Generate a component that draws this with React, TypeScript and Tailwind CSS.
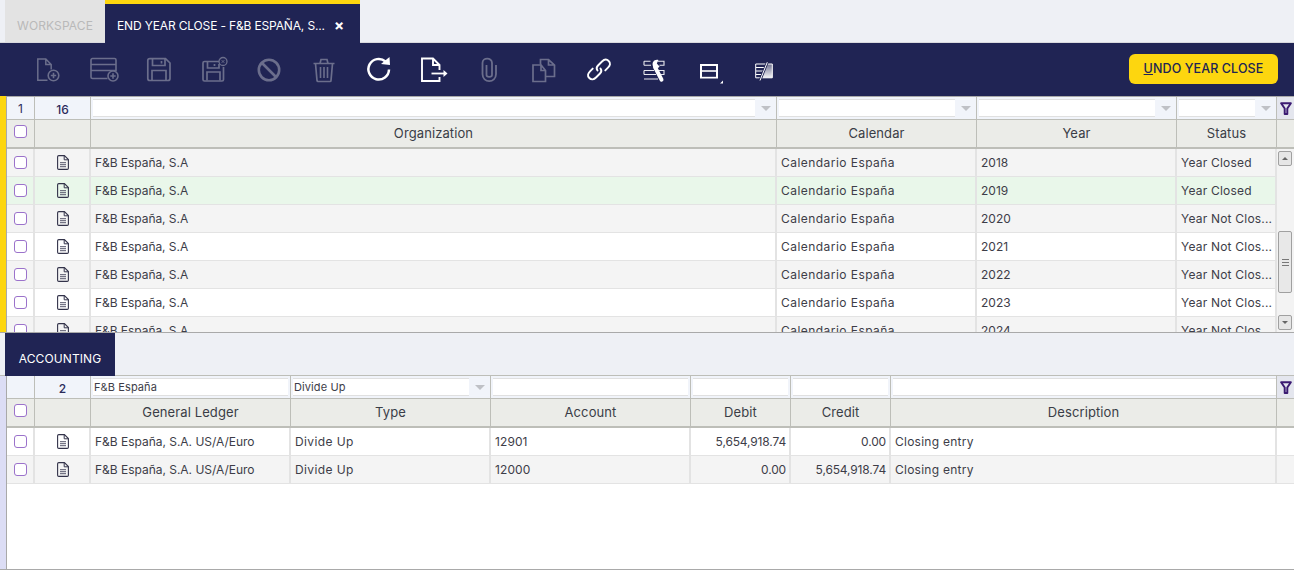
import React from "react";

const DIM = "#6b6e8c";
const W = "#ffffff";
const NAVY = "#202454";

function Ico({ children, w = 28, h = 28, className = "" }: { children: React.ReactNode; w?: number; h?: number; className?: string }) {
  return (
    <svg width={w} height={h} viewBox={`0 0 ${w} ${h}`} fill="none" className={"shrink-0 " + className}>
      {children}
    </svg>
  );
}

const NewDoc = () => (
  <Ico>
    <path d="M13.5 24.3H3.8V3H11.8L17.2 8.5V13.5M11.8 3V8.5H17.2" stroke={DIM} strokeWidth="1.5" />
    <circle cx="19.5" cy="19.5" r="5.3" stroke={DIM} strokeWidth="1.6" />
    <path d="M19.5 16.8V22.2M16.8 19.5H22.2" stroke={DIM} strokeWidth="1.6" />
  </Ico>
);
const NewLine = () => (
  <Ico w={30}>
    <path d="M18.5 22.5H3.5C2.6 22.5 2 21.9 2 21V4C2 3.2 2.6 2.5 3.5 2.5H25.5C26.4 2.5 27 3.2 27 4V15.5M2 8.5H27M2 14.5H27" stroke={DIM} strokeWidth="1.6" />
    <circle cx="24" cy="20" r="5" fill={NAVY} stroke={DIM} strokeWidth="1.6" />
    <path d="M24 17.3V22.7M21.3 20H26.7" stroke={DIM} strokeWidth="1.6" />
  </Ico>
);
const Save = () => (
  <Ico>
    <path d="M2.8 4.5C2.8 3.5 3.8 2.7 4.8 2.7H20.5L25 7V22.5C25 23.5 24.2 24.5 23 24.5H4.8C3.8 24.5 2.8 23.5 2.8 22.5Z" stroke={DIM} strokeWidth="1.7" />
    <path d="M7.5 3V9.5H20V3M16.5 5V7.5M7 24V14.5H21V24" stroke={DIM} strokeWidth="1.7" />
  </Ico>
);
const SaveClose = () => (
  <Ico>
    <path d="M19 5.5H4.5C3.6 5.5 3 6.1 3 7V23.5C3 24.4 3.6 25 4.5 25H22C22.9 25 23.5 24.4 23.5 23.5V11" stroke={DIM} strokeWidth="1.7" />
    <path d="M7.5 6V12H19V8M14.5 8V10M7 24.5V16H20V24.5" stroke={DIM} strokeWidth="1.7" />
    <circle cx="23" cy="5.5" r="4" stroke={DIM} strokeWidth="1.3" />
    <path d="M21.7 4.2L24.3 6.8M24.3 4.2L21.7 6.8" stroke={DIM} strokeWidth="1" />
  </Ico>
);
const Ban = () => (
  <Ico>
    <circle cx="14" cy="14" r="10.2" stroke={DIM} strokeWidth="2.6" />
    <path d="M7 7L21 21" stroke={DIM} strokeWidth="2.6" />
  </Ico>
);
const Trash = () => (
  <Ico>
    <path d="M3.5 7.5H24.5M10 7.5L11 3.5H17L18 7.5M5.5 7.5L7 24.5C7.1 25 7.5 25.5 8 25.5H20C20.5 25.5 21 25 21 24.5L22.5 7.5" stroke={DIM} strokeWidth="1.7" />
    <path d="M10.5 11V22M14 11V22M17.5 11V22" stroke={DIM} strokeWidth="1.6" />
  </Ico>
);
const Refresh = () => (
  <Ico>
    <path d="M20.5 5.5A10.3 10.3 0 1 0 24 13.5" stroke={W} strokeWidth="2.5" />
    <path d="M16 8L25 9L24.5 1Z" fill={W} />
  </Ico>
);
const Export = () => (
  <Ico w={30}>
    <path d="M19.5 21V25H2V2.5H13L19.5 9V14M13 2.5V9H19.5" stroke={W} strokeWidth="1.9" />
    <path d="M11.5 17.5H24" stroke={W} strokeWidth="1.8" />
    <path d="M23.5 14L27.5 17.5L23.5 21Z" fill={W} />
  </Ico>
);
const Clip = () => (
  <Ico>
    <path d="M11.5 9V19C11.5 21.5 17 21.5 17 19V7C17 1.2 7.5 1.2 7.5 7V18C7.5 27.5 21 27.5 21 18V9" stroke={DIM} strokeWidth="1.8" />
  </Ico>
);
const Copy = () => (
  <Ico>
    <path d="M11 9H3V25.5H15.5V14.5L11 9V14.5H15.5" stroke={DIM} strokeWidth="1.7" />
    <path d="M10.5 8V3.5H18.5L24.5 9V20.5H16M18.5 3.5V9H24.5" stroke={DIM} strokeWidth="1.7" />
  </Ico>
);
const LinkIcon = () => (
  <Ico>
    <path d="M12.5 14.5C11 12.5 11.5 11 13 9.5L17 5.5C19 3.5 21.5 2.8 23.7 5C26 7.2 25 9.7 23 11.7L20.3 14.4" stroke={W} strokeWidth="1.9" strokeLinecap="round" />
    <path d="M15.5 12.5C17 14.5 16.5 16 15 17.5L11 21.5C9 23.5 6.5 24.2 4.3 22C2 19.8 3 17.3 5 15.3L7.7 12.6" stroke={W} strokeWidth="1.9" strokeLinecap="round" />
  </Ico>
);
const Tools = () => (
  <Ico>
    <path d="M4 5.2H10.5M4 9.2H11M4 14.5H14M4 18.5H16M4 23H18M18 5.2H24V9.2H19.5M19 14.5H24V18.5H21M4 5.2V9.2M4 14.5V18.5" stroke={W} strokeWidth="1.1" opacity="0.9" />
    <path d="M15 11L21.5 23.6" stroke={W} strokeWidth="4" strokeLinecap="round" />
    <path d="M18.5 4C14.5 3 11.5 6 13 10.5C14.5 13 18.5 12.5 19.5 10.5L16.8 7.5Z" fill={W} />
  </Ico>
);
const Layout = () => (
  <Ico w={28}>
    <rect x="5" y="8" width="18" height="14.5" fill={W} />
    <rect x="7" y="10" width="14" height="4.2" fill={NAVY} />
    <rect x="7" y="15.8" width="14" height="5" fill={NAVY} />
    <path d="M28 24.5V27.5H25Z" fill={W} />
  </Ico>
);
const Form = () => (
  <Ico w={28}>
    <defs>
      <linearGradient id="fg" x1="0" y1="0" x2="0" y2="1">
        <stop offset="0" stopColor="#ffffff" stopOpacity="0.35" />
        <stop offset="1" stopColor="#ffffff" stopOpacity="0.95" />
      </linearGradient>
    </defs>
    <path d="M16.5 8H22.3V21.8H11.5Z" fill="url(#fg)" />
    <path d="M5.7 8H22.3V21.8H5.7Z" stroke={W} strokeWidth="1" />
    <path d="M6 11.5H15M6 15H14M6 18.5H13" stroke={W} strokeWidth="1" />
    <path d="M17.3 6.2L10 24.5" stroke={NAVY} strokeWidth="2.6" />
    <path d="M17.3 6.2L10 24.5" stroke={W} strokeWidth="1" />
  </Ico>
);

const RowDoc = () => (
  <svg width="12" height="15" viewBox="0 0 12 15" fill="none">
    <path d="M1.8.6H7.4L11.4 4.6V13.2C11.4 13.9 10.9 14.4 10.2 14.4H1.8C1.1 14.4.6 13.9.6 13.2V1.8C.6 1.1 1.1.6 1.8.6Z" stroke="#33334a" strokeWidth="1.1" />
    <path d="M7.2.8V4.8H11.2" stroke="#33334a" strokeWidth="1" />
    <path d="M3 7.7H9M3 9.7H9M3 11.7H9" stroke="#55566a" strokeWidth="1" />
  </svg>
);

const Funnel = () => (
  <svg width="12" height="13" viewBox="0 0 11 12" fill="none">
    <path d="M1 1.2H10L6.7 6V11H4.3V6Z" stroke="#3b1a72" strokeWidth="1.8" strokeLinejoin="round" />
  </svg>
);

const Check = ({ className = "" }: { className?: string }) => (
  <span className={"block w-[13px] h-[13px] rounded-[3px] border-[1.5px] border-[#9b72cb] bg-white " + className} />
);

const Arrow = () => (
  <span className="w-0 h-0 border-x-[5px] border-x-transparent border-t-[5px] border-t-[#bfc1c6]" />
);

function FilterCell({ w, arrow, value, last }: { w: number; arrow?: boolean; value?: string; last?: boolean }) {
  return (
    <div style={{ width: w }} className="shrink-0 h-full flex bg-[#f1f4fa] border-r border-[#bdbeb8]">
      <div className={"my-[2px] ml-[2px] flex-1 min-w-0 h-[18px] bg-white border-y border-[#e0e0e0] pl-[1px] text-[11px] leading-[16px] text-[#3d3d48] " + (last ? "mr-0" : arrow ? "" : "mr-[2px]")}>
        {value}
      </div>
      {arrow && (
        <div className="w-[21px] shrink-0 flex items-center justify-center">
          <Arrow />
        </div>
      )}
    </div>
  );
}

function FilterRow({ left, count, cols }: { left: string; count: string; cols: React.ReactNode }) {
  return (
    <div className="flex h-[23px] border-b border-[#bdbeb8] shrink-0">
      <div className="w-[28px] shrink-0 bg-[#f1f4fa] border-r border-[#bdbeb8] text-center text-[12px] leading-[24px] text-[#2a2a5a]">{left}</div>
      <div className="w-[56px] shrink-0 bg-[#f1f4fa] border-r border-[#bdbeb8] text-center text-[12px] leading-[25px] text-[#2a2a5a] font-medium">{count}</div>
      {cols}
      <div className="flex-1 flex items-center justify-center bg-[#e4e6ee]">
        <Funnel />
      </div>
    </div>
  );
}

function HeaderRow({ cols, widths }: { cols: string[]; widths: number[] }) {
  return (
    <div className="h-[29px] flex shrink-0 bg-[#ebece8] border-b-2 border-[#bdbeb8] text-[13px] text-[#3a3d46]">
      <div className="w-[28px] shrink-0 border-r border-[#bdbeb8] pl-[7px] pt-[5px]">
        <Check />
      </div>
      <div className="w-[56px] shrink-0 border-r border-[#bdbeb8]" />
      {cols.map((c, i) => (
        <div key={c} style={{ width: widths[i] }} className="shrink-0 border-r border-[#bdbeb8] flex items-center justify-center">
          {c}
        </div>
      ))}
    </div>
  );
}

function DataRow({ cells, widths, bg, right = [], tracks }: { cells: string[]; widths: number[]; bg: string; right?: number[]; tracks: string[] }) {
  return (
    <div className={"flex h-[28px] shrink-0 border-b border-[#e3e3e3] text-[12px] text-[#3d3d48] " + bg}>
      <div className="w-[28px] shrink-0 border-r-2 border-[#e3e3e3] pl-[7px] pt-[7px]">
        <Check />
      </div>
      <div className="w-[56px] shrink-0 border-r-2 border-[#e3e3e3] flex items-center justify-center pl-[1px]">
        <RowDoc />
      </div>
      {cells.map((c, i) => (
        <div
          key={i}
          style={{ width: widths[i] }}
          className={"shrink-0 border-r-2 border-[#e3e3e3] flex items-center pl-[4px] pr-[3px] whitespace-nowrap overflow-hidden " + (right.includes(i) ? "justify-end " : "") + tracks[i]}
        >
          {c}
        </div>
      ))}
    </div>
  );
}

const rows = [
  ["2018", "Year Closed", "bg-[#f4f4f4]"],
  ["2019", "Year Closed", "bg-[#e9f7ea]"],
  ["2020", "Year Not Clos...", "bg-[#f4f4f4]"],
  ["2021", "Year Not Clos...", "bg-white"],
  ["2022", "Year Not Clos...", "bg-[#f4f4f4]"],
  ["2023", "Year Not Clos...", "bg-white"],
  ["2024", "Year Not Clos...", "bg-[#f4f4f4]"],
];

const topTracks = ["tracking-[-0.05px]", "tracking-[0.45px]", "tracking-[0px]", "tracking-[0.2px]"];
const botTracks = ["tracking-[-0.02px]", "tracking-[0.4px]", "tracking-[0.1px]", "tracking-[-0.15px]", "tracking-[-0.15px]", "tracking-[0.25px]"];
const botWidths = [200, 200, 200, 100, 100, 386];

export default function App() {
  return (
    <div className="w-[1294px] h-[570px] overflow-hidden flex flex-col bg-[#eef0f5] font-['Inter','Noto_Sans',sans-serif] tracking-[0.1px]">
      {/* tabs */}
      <div className="flex h-[43px] shrink-0 pl-[5px] border-b border-[#d8d9de]">
        <div className="w-[100px] bg-[#e3e3e3] text-[#b9b9b9] text-[12px] flex items-center justify-center pt-[9px]">WORKSPACE</div>
        <div className="w-[255px] h-[43px] border-t-4 border-[#fdd60f] bg-[#202454] text-white text-[12px] tracking-[-0.15px] flex items-center pl-[12px] pt-[4px] whitespace-nowrap">
          <span>END YEAR CLOSE - F&amp;B ESPAÑA, S...</span>
          <span className="ml-[9px] text-[15px] font-bold leading-none">×</span>
        </div>
      </div>

      {/* toolbar */}
      <div className="h-[53px] shrink-0 bg-[#202454] flex items-center pl-[34px] pr-[16px]">
        <div className="w-[55px]"><NewDoc /></div>
        <div className="w-[56px]"><NewLine /></div>
        <div className="w-[55px]"><Save /></div>
        <div className="w-[55px]"><SaveClose /></div>
        <div className="w-[55px]"><Ban /></div>
        <div className="w-[55px]"><Trash /></div>
        <div className="w-[55px]"><Refresh /></div>
        <div className="w-[55px]"><Export /></div>
        <div className="w-[55px]"><Clip /></div>
        <div className="w-[55px]"><Copy /></div>
        <div className="w-[55px]"><LinkIcon /></div>
        <div className="w-[55px]"><Tools /></div>
        <div className="w-[55px]"><Layout /></div>
        <div className="w-[55px]"><Form /></div>
        <button className="ml-auto w-[149px] h-[30px] mb-[1px] rounded-[6px] bg-[#fdd60f] text-[#202454] text-[12.5px] font-medium">
          <span className="underline">U</span>NDO YEAR CLOSE
        </button>
      </div>

      {/* top grid */}
      <div className="h-[237px] shrink-0 flex border-b border-[#a9a9a9]">
        <div className="w-[6px] shrink-0 bg-[#fdd60f]" />
        <div className="w-[1288px] flex flex-col border-l border-[#a9a9a9] border-t border-t-[#a9a9a9] bg-white overflow-hidden">
          <FilterRow
            left="1"
            count="16"
            cols={
              <>
                <FilterCell w={686} arrow />
                <FilterCell w={200} arrow />
                <FilterCell w={200} arrow />
                <FilterCell w={100} arrow />
              </>
            }
          />
          <HeaderRow cols={["Organization", "Calendar", "Year", "Status"]} widths={[686, 200, 200, 100]} />
          <div className="flex flex-1 min-h-0">
            <div className="w-[1270px] shrink-0 flex flex-col overflow-hidden">
              {rows.map((r) => (
                <DataRow key={r[0]} bg={r[2]} tracks={topTracks} widths={[686, 200, 200, 100]} cells={["F&B España, S.A", "Calendario España", r[0], r[1]]} />
              ))}
            </div>
            <div className="flex-1 flex flex-col bg-[#f3f3f3] items-start pl-[1px] pt-[2px] pb-[2px]">
              <div className="w-[14px] h-[15px] rounded-[2px] border border-[#a0a0a0] bg-[#e6e6e6] flex items-center justify-center">
                <span className="w-0 h-0 border-x-[3px] border-x-transparent border-b-[3px] border-b-[#666]" />
              </div>
              <div className="h-[65px]" />
              <div className="w-[14px] h-[62px] rounded-[2px] border border-[#a0a0a0] bg-[#e8e8e8] flex flex-col gap-[2px] items-center justify-center">
                <span className="w-[7px] h-px bg-[#777]" />
                <span className="w-[7px] h-px bg-[#777]" />
                <span className="w-[7px] h-px bg-[#777]" />
              </div>
              <div className="flex-1" />
              <div className="w-[14px] h-[15px] rounded-[2px] border border-[#a0a0a0] bg-[#e6e6e6] flex items-center justify-center">
                <span className="w-0 h-0 border-x-[3px] border-x-transparent border-t-[3px] border-t-[#666]" />
              </div>
            </div>
          </div>
        </div>
      </div>

      {/* section tab */}
      <div className="h-[43px] shrink-0 pl-[5px] border-b border-[#bdbeb8]">
        <div className="w-[110px] h-[43px] bg-[#202454] text-white text-[12px] flex items-end justify-center pb-[8px]">ACCOUNTING</div>
      </div>

      {/* bottom grid */}
      <div className="flex-1 min-h-0 flex border-b border-[#a9a9a9]">
        <div className="w-[6px] shrink-0 bg-[#dcddf5]" />
        <div className="w-[1288px] flex flex-col border-l border-[#a9a9a9] bg-white">
          <FilterRow
            left=""
            count="2"
            cols={
              <>
                <FilterCell w={200} value="F&B España" />
                <FilterCell w={200} value="Divide Up" arrow />
                <FilterCell w={200} />
                <FilterCell w={100} />
                <FilterCell w={100} />
                <FilterCell w={386} last />
              </>
            }
          />
          <HeaderRow cols={["General Ledger", "Type", "Account", "Debit", "Credit", "Description"]} widths={botWidths} />
          <DataRow
            bg="bg-white"
            right={[3, 4]}
            tracks={botTracks}
            widths={botWidths}
            cells={["F&B España, S.A. US/A/Euro", "Divide Up", "12901", "5,654,918.74", "0.00", "Closing entry"]}
          />
          <DataRow
            bg="bg-[#f4f4f4]"
            right={[3, 4]}
            tracks={botTracks}
            widths={botWidths}
            cells={["F&B España, S.A. US/A/Euro", "Divide Up", "12000", "0.00", "5,654,918.74", "Closing entry"]}
          />
        </div>
      </div>
    </div>
  );
}
